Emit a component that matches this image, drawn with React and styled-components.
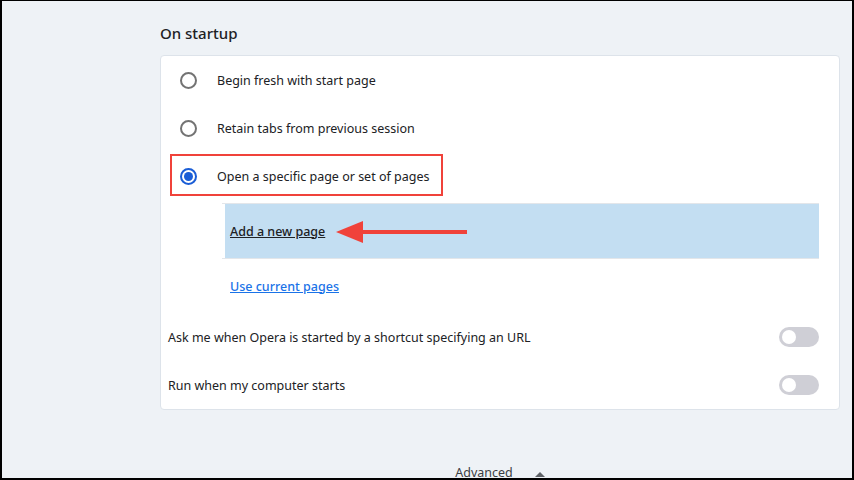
import React from 'react';
import styled, { createGlobalStyle } from 'styled-components';

const GlobalStyle = createGlobalStyle`
  html, body {
    margin: 0;
    padding: 0;
    background: #000;
  }
  * {
    box-sizing: border-box;
  }
`;

// the whole page, with the black screenshot frame
const Frame = styled.div`
  width: 854px;
  height: 480px;
  overflow: hidden;
  background: #eef2f6;
  border-style: solid;
  border-color: #000;
  border-width: 1px 2px 2px 2px;
  font-family: 'Noto Sans', 'Open Sans', sans-serif;
  color: #202124;
`;

const Section = styled.div`
  width: 680px;
  margin-left: 158px;
  padding-top: 22px;
`;

const Heading = styled.h2`
  margin: 0 0 12px;
  font-size: 15px;
  line-height: 20px;
  font-weight: 500;
  color: #202124;
`;

const Card = styled.div`
  position: relative;
  background: #fff;
  border: 1px solid #dde3ea;
  border-radius: 4px;
  padding-right: 20px;
`;

const RadioRow = styled.div`
  position: relative;
  height: 48px;
  display: flex;
  align-items: center;
  padding-left: 19px;
  font-size: 12.5px;
`;

const Radio = styled.span`
  width: 17px;
  height: 17px;
  border-radius: 50%;
  border: 2px solid ${(p) => (p.checked ? '#1a5dd6' : '#737373')};
  display: flex;
  align-items: center;
  justify-content: center;
  margin-right: 20px;
  flex-shrink: 0;

  &::after {
    content: '';
    display: ${(p) => (p.checked ? 'block' : 'none')};
    width: 9px;
    height: 9px;
    border-radius: 50%;
    background: #1a5dd6;
  }
`;

// red annotation box drawn over the selected option
const Highlight = styled.div`
  position: absolute;
  left: 9px;
  top: 2px;
  width: 273px;
  height: 42px;
  border: 2px solid #f0423a;
`;

const PageList = styled.div`
  margin: 3px 0 0 61px;
`;

const PageItem = styled.div`
  position: relative;
  height: 56px;
  border-top: 1px solid #e3e6ea;
  border-bottom: 1px solid #e3e6ea;
  padding-left: 3px;
  display: flex;
`;

const HoverFill = styled.div`
  flex: 1;
  background: #c3def2;
  display: flex;
  align-items: center;
  padding-left: 5px;
`;

const PageLink = styled.a`
  font-size: 12.5px;
  font-weight: 500;
  color: ${(p) => (p.blue ? '#1a73e8' : '#202124')};
  text-decoration: underline;
  cursor: pointer;
`;

const UseRow = styled.div`
  height: 54px;
  display: flex;
  align-items: center;
  padding-left: 8px;
`;

const Arrow = styled.svg`
  position: absolute;
  left: 114px;
  top: 16px;
`;

const ToggleRow = styled.div`
  height: 48px;
  display: flex;
  align-items: center;
  justify-content: space-between;
  padding-left: 7px;
  font-size: 12.5px;
`;

const Toggle = styled.span`
  width: 40px;
  height: 20px;
  border-radius: 10px;
  background: #cfcfd6;
  display: flex;
  align-items: center;
  padding-left: 3px;

  &::after {
    content: '';
    width: 14px;
    height: 14px;
    border-radius: 50%;
    background: #fff;
  }
`;

const Advanced = styled.div`
  display: flex;
  justify-content: center;
  align-items: center;
  gap: 22px;
  margin-top: 54px;
  font-size: 12.5px;
  color: #3c4043;
`;

const Caret = styled.span`
  width: 0;
  height: 0;
  border-left: 5px solid transparent;
  border-right: 5px solid transparent;
  border-bottom: 5px solid #5f6368;
  margin-top: 4px;
`;

const options = [
  { label: 'Begin fresh with start page' },
  { label: 'Retain tabs from previous session' },
  { label: 'Open a specific page or set of pages', checked: true },
];

const toggles = [
  'Ask me when Opera is started by a shortcut specifying an URL',
  'Run when my computer starts',
];

const App = () => {
  return (
    <Frame>
      <GlobalStyle />
      <Section>
        <Heading>On startup</Heading>
        <Card>
          {options.map((o) => (
            <RadioRow key={o.label}>
              {o.checked && <Highlight />}
              <Radio checked={o.checked} />
              {o.label}
            </RadioRow>
          ))}
          <PageList>
            <PageItem>
              <HoverFill>
                <PageLink>Add a new page</PageLink>
              </HoverFill>
              <Arrow width="132" height="24" viewBox="0 0 132 24">
                <path d="M26 10 L131 10 L131 14 L26 14 Z" fill="#f0423a" />
                <path d="M0 12 L27 1 L27 23 Z" fill="#f0423a" />
              </Arrow>
            </PageItem>
            <UseRow>
              <PageLink blue>Use current pages</PageLink>
            </UseRow>
          </PageList>
          {toggles.map((t) => (
            <ToggleRow key={t}>
              {t}
              <Toggle />
            </ToggleRow>
          ))}
        </Card>
        <Advanced>
          Advanced
          <Caret />
        </Advanced>
      </Section>
    </Frame>
  );
};

export default App;
